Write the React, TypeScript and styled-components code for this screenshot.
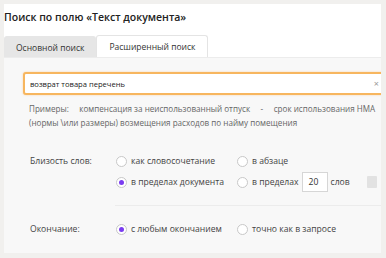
import React from "react";
import styled, { createGlobalStyle } from "styled-components";

const Global = createGlobalStyle`
  html, body { margin: 0; padding: 0; background: #f1f0ee; }
  body { font-family: "Open Sans", "Noto Sans", sans-serif; color: #222; }
  * { box-sizing: border-box; }
`;

const Page = styled.div`
  width: 386px;
  height: 258px;
  padding: 4px 5px 5px 4px;
  overflow: hidden;
`;

const Panel = styled.div`
  background: #fff;
  height: 100%;
  display: flex;
  flex-direction: column;
`;

const Title = styled.div`
  font-size: 10.5px;
  font-weight: 600;
  padding: 6px 0 0 0;
  height: 31px;
  color: #222;
`;

const Tabs = styled.div`
  display: flex;
  align-items: flex-end;
  height: 22px;
`;

const Tab = styled.div<{ $active?: boolean }>`
  height: ${(p) => (p.$active ? "22px" : "21px")};
  padding: 0 ${(p) => (p.$active ? "12px" : "11px")};
  display: flex;
  align-items: center;
  font-size: 8.5px;
  color: #333;
  background: ${(p) => (p.$active ? "#fff" : "#e6e6e6")};
  border: 1px solid ${(p) => (p.$active ? "#e4e4e4" : "#e6e6e6")};
  border-bottom: none;
  border-radius: 3px 3px 0 0;
`;

const Body = styled.div`
  flex: 1;
  background: #f8f8f8;
  border-top: 1px solid #ececec;
  padding: 14px 0 0 19px;
  display: flex;
  flex-direction: column;
  overflow: hidden;
`;

const InputBox = styled.div`
  height: 23px;
  margin-right: -4px;
  border: 2px solid #f7b65f;
  border-radius: 3px;
  background: #fff;
  box-shadow: 0 0 2px rgba(247, 182, 95, 0.6);
  display: flex;
  align-items: center;
  padding: 0 4px 0 5px;
  font-size: 7.6px;
  color: #222;
`;

const InputText = styled.span`
  flex: 1;
`;

const Clear = styled.span`
  color: #999;
  font-size: 9px;
`;

const Examples = styled.div`
  margin-top: 7px;
  padding-left: 6px;
  font-size: 8.1px;
  line-height: 14px;
  color: #666;
  white-space: pre;
`;

const Section = styled.div<{ $top: number }>`
  margin-top: ${(p) => p.$top}px;
  display: grid;
  grid-template-columns: 86px 1fr;
  padding-left: 7px;
`;

const Label = styled.div`
  font-size: 8.6px;
  color: #444;
  height: 18px;
  display: flex;
  align-items: center;
`;

const Options = styled.div`
  display: grid;
  grid-template-columns: 121px 1fr;
  row-gap: 3px;
  align-items: center;
`;

const Opt = styled.label`
  display: flex;
  align-items: center;
  gap: 4px;
  font-size: 8.6px;
  color: #444;
  height: 18px;
  white-space: nowrap;
`;

const Radio = styled.span<{ $on?: boolean }>`
  width: 11px;
  height: 11px;
  border-radius: 50%;
  border: 1px solid #c8c8c8;
  background: #fff;
  display: flex;
  align-items: center;
  justify-content: center;
  flex: none;
  &::after {
    content: "";
    width: 5px;
    height: 5px;
    border-radius: 50%;
    background: #7a3cf0;
    display: ${(p) => (p.$on ? "block" : "none")};
  }
`;

const NumBox = styled.span`
  width: 26px;
  height: 20px;
  border: 1px solid #d6d6d6;
  background: #fff;
  display: flex;
  align-items: center;
  padding-left: 6px;
  font-size: 8.6px;
  color: #333;
  margin: 0 -1px;
`;

const Square = styled.span`
  width: 10px;
  height: 12px;
  background: #e2e2e2;
  border-radius: 1px;
  margin-left: 13px;
`;

const Divider = styled.div<{ $top: number }>`
  margin-top: ${(p) => p.$top}px;
  margin-left: 92px;
  border-top: 1px solid #ececec;
`;

export default function App() {
  return (
    <Page>
      <Global />
      <Panel>
        <Title>Поиск по полю «Текст документа»</Title>
        <Tabs>
          <Tab>Основной поиск</Tab>
          <Tab $active>Расширенный поиск</Tab>
        </Tabs>
        <Body>
          <InputBox>
            <InputText>возврат товара перечень</InputText>
            <Clear>×</Clear>
          </InputBox>
          <Examples>
            {"Примеры:     компенсация за неиспользованный отпуск     -     срок использования НМА\n(нормы \\или размеры) возмещения расходов по найму помещения"}
          </Examples>
          <Section $top={22}>
            <Label>Близость слов:</Label>
            <Options>
              <Opt><Radio />как словосочетание</Opt>
              <Opt><Radio />в абзаце</Opt>
              <Opt><Radio $on />в пределах документа</Opt>
              <Opt>
                <Radio />в пределах
                <NumBox>20</NumBox>слов
                <Square />
              </Opt>
            </Options>
          </Section>
          <Divider $top={14} />
          <Section $top={14}>
            <Label>Окончание:</Label>
            <Options>
              <Opt><Radio $on />с любым окончанием</Opt>
              <Opt><Radio />точно как в запросе</Opt>
            </Options>
          </Section>
        </Body>
      </Panel>
    </Page>
  );
}
